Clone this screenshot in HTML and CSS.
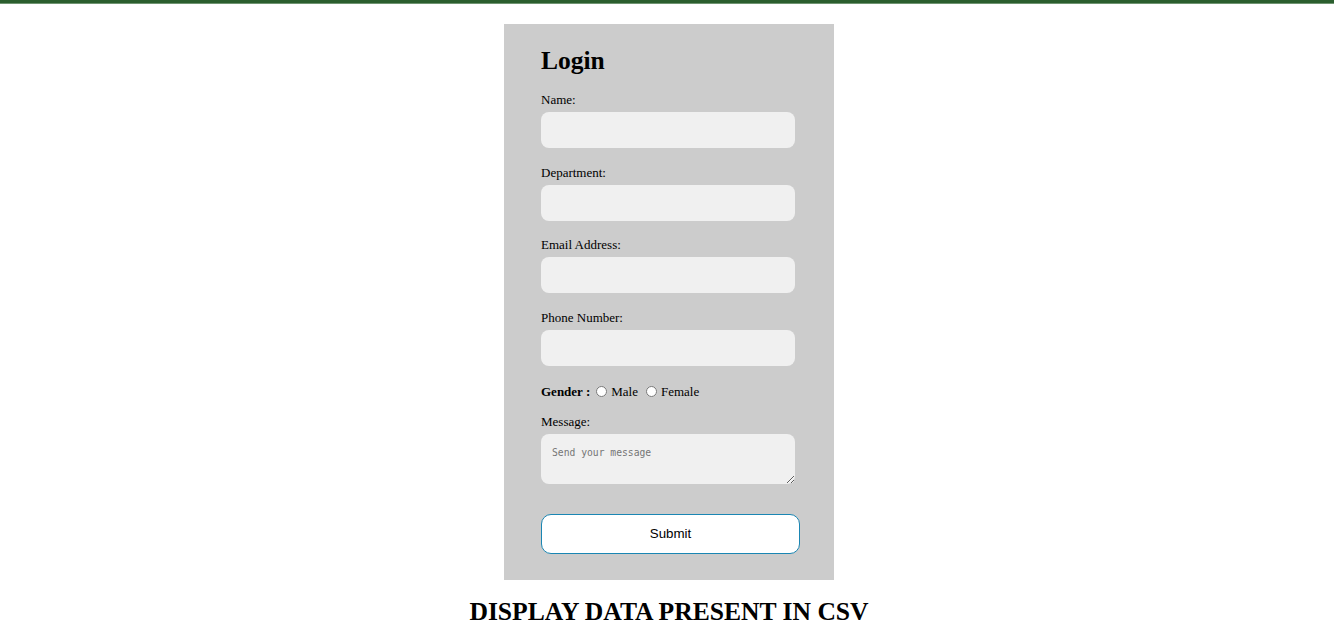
FILE: index.html
```html
<!DOCTYPE html>
<html>
<head>
<meta charset="utf-8">
<title>Login</title>
<link rel="stylesheet" href="styles.css">
</head>
<body>
<div class="topbar"></div>
<form class="card">
  <h2 class="title">Login</h2>
  <label class="lbl" for="name">Name:</label>
  <input class="field" id="name" type="text">
  <label class="lbl" for="dept">Department:</label>
  <input class="field" id="dept" type="text">
  <label class="lbl" for="email">Email Address:</label>
  <input class="field" id="email" type="text">
  <label class="lbl" for="phone">Phone Number:</label>
  <input class="field" id="phone" type="text">
  <div class="gender">
    <b class="glabel">Gender :</b>
    <input class="radio" type="radio" name="g" id="male"><label for="male" class="rlabel">Male</label>
    <input class="radio" type="radio" name="g" id="female"><label for="female" class="rlabel">Female</label>
  </div>
  <label class="lbl" for="msg">Message:</label>
  <textarea class="area" id="msg" placeholder="Send your message"></textarea>
  <button class="submit" type="button">Submit</button>
</form>
<h2 class="csv">DISPLAY DATA PRESENT IN CSV</h2>
</body>
</html>
```
FILE: styles.css
```css
html, body {
  margin: 0;
  padding: 0;
  background: #ffffff;
  font-family: "Liberation Serif", "Times New Roman", serif;
  color: #000;
}
.topbar {
  height: 3px;
  background: #2b5e2e;
  border-bottom: 1px solid #6f9471;
}
.card {
  box-sizing: border-box;
  width: 330px;
  margin: 20px 0 0 calc(50% - 163px);
  background: #cccccc;
  padding: 22px 37px 26px;
  display: flex;
  flex-direction: column;
  align-items: flex-start;
}
.title {
  margin: 0 0 17px;
  font-size: 25.5px;
  line-height: 29px;
  font-weight: bold;
}
.lbl {
  display: block;
  font-size: 13px;
  line-height: 15px;
  margin: 0 0 5px;
}
.field {
  box-sizing: border-box;
  width: 254px;
  height: 36px;
  margin: 0 0 16.67px;
  border: none;
  border-radius: 8px;
  background: #f0f0f0;
  padding: 0 10px;
  outline: none;
}
.gender {
  display: flex;
  align-items: center;
  height: 15px;
  font-size: 13px;
  line-height: 15px;
  margin: 1px 0 15px;
}
.glabel {
  margin-right: 6px;
}
.radio {
  width: 11px;
  height: 11px;
  margin: 0 4px 0 0;
}
.rlabel {
  margin-right: 8px;
}
.area {
  box-sizing: border-box;
  width: 254px;
  height: 50px;
  margin: 0 0 30px;
  border: none;
  border-radius: 8px;
  background: #f0f0f0;
  padding: 13px 11px 11px;
  font-family: "DejaVu Sans Mono", "Liberation Mono", monospace;
  font-size: 9.7px;
  line-height: 12px;
  outline: none;
}
.area::placeholder {
  color: #757575;
}
.submit {
  box-sizing: border-box;
  width: 259px;
  height: 40px;
  background: #ffffff;
  border: 1px solid #1a86b3;
  border-radius: 10px;
  font-family: "Liberation Sans", Arial, sans-serif;
  font-size: 13.33px;
  color: #000;
  padding: 0;
}
.csv {
  margin: 17px 0 0;
  padding-left: 4px;
  text-align: center;
  font-size: 25.6px;
  line-height: 29px;
  font-weight: bold;
}
```
